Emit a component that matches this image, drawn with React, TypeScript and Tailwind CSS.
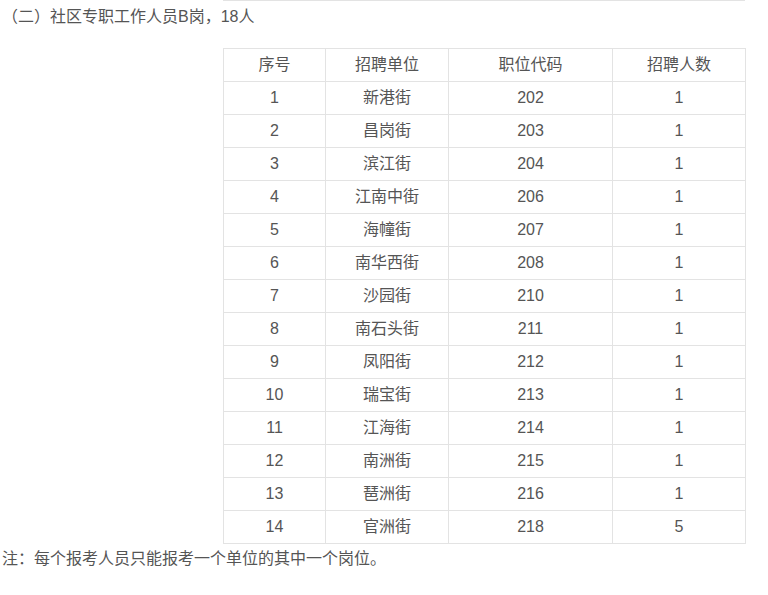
const rows = [
  ['1', '新港街', '202', '1'],
  ['2', '昌岗街', '203', '1'],
  ['3', '滨江街', '204', '1'],
  ['4', '江南中街', '206', '1'],
  ['5', '海幢街', '207', '1'],
  ['6', '南华西街', '208', '1'],
  ['7', '沙园街', '210', '1'],
  ['8', '南石头街', '211', '1'],
  ['9', '凤阳街', '212', '1'],
  ['10', '瑞宝街', '213', '1'],
  ['11', '江海街', '214', '1'],
  ['12', '南洲街', '215', '1'],
  ['13', '琶洲街', '216', '1'],
  ['14', '官洲街', '218', '5'],
];

const cell = 'border border-[#e3e3e3] h-[33px] p-0 text-center align-middle font-normal';

export default function App() {
  return (
    <div className="min-h-screen bg-white text-[16px] leading-6 text-[#555] font-['Liberation_Sans','Noto_Sans_CJK_SC',sans-serif]">
      {/* end of the previous table */}
      <div className="ml-[223px] w-[522px] h-[1px] bg-[#e3e3e3]" />

      <p className="pl-[2px] pt-[4px]">（二）社区专职工作人员B岗，18人</p>

      <table className="ml-[223px] mt-[19px] w-[522px] border-collapse table-fixed">
        <colgroup>
          <col className="w-[102px]" />
          <col className="w-[123px]" />
          <col className="w-[164px]" />
          <col className="w-[133px]" />
        </colgroup>
        <thead>
          <tr>
            <th className={cell}>序号</th>
            <th className={cell}>招聘单位</th>
            <th className={cell}>职位代码</th>
            <th className={cell}>招聘人数</th>
          </tr>
        </thead>
        <tbody>
          {rows.map((r) => (
            <tr key={r[0]}>
              {r.map((v, i) => (
                <td key={i} className={cell}>
                  {v}
                </td>
              ))}
            </tr>
          ))}
        </tbody>
      </table>

      <p className="pl-[2px] pt-[3px]">注：每个报考人员只能报考一个单位的其中一个岗位。</p>
    </div>
  );
}
